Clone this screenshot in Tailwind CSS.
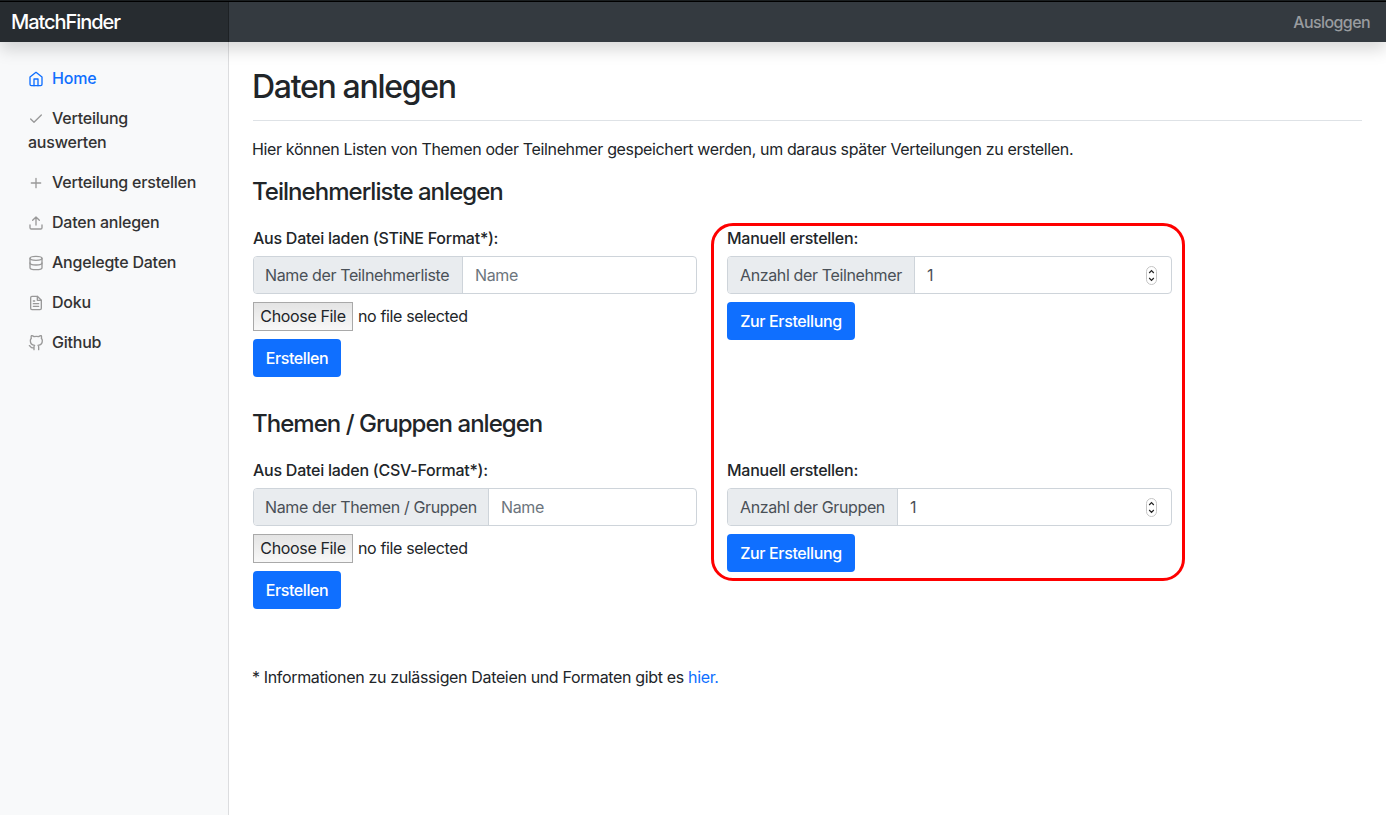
<!DOCTYPE html>
<html lang="de">
<head>
<meta charset="utf-8">
<title>MatchFinder</title>
<script src="https://cdn.jsdelivr.net/npm/@tailwindcss/browser@4"></script>
</head>
<body class="h-[815px] overflow-hidden bg-white font-['Inter','Liberation_Sans',sans-serif] text-base leading-6 text-[#212529] antialiased">
<div class="relative flex h-[815px] flex-col">
  <div class="h-px shrink-0 bg-[#1b1f21]"></div>
  <header class="relative z-10 flex h-[41px] shrink-0 items-center justify-between border-t border-black bg-[#343a40] pr-4 shadow-[0_8px_16px_rgba(0,0,0,0.15)]">
    <div class="flex h-10 w-[229px] items-center border-r border-[#1d2124] bg-[#272c30] pl-[11px] text-xl font-medium tracking-[-1.05px] text-white">MatchFinder</div>
    <a class="font-medium tracking-[-0.6px] text-[#999c9f]">Ausloggen</a>
  </header>

  <div class="flex min-h-0 grow">
    <nav class="w-[229px] shrink-0 border-r border-[#dcdddf] bg-[#f8f9fa] pt-4 font-medium tracking-[-0.22px] text-[#333]">
      <a class="block py-2 pl-7 text-[#0f6fff]"><svg class="mr-2 inline-block size-4 align-[-3px]" viewBox="0 0 24 24" fill="none" stroke="currentColor" stroke-width="2" stroke-linecap="round" stroke-linejoin="round"><path d="M3 9l9-7 9 7v11a2 2 0 0 1-2 2H5a2 2 0 0 1-2-2z"/><path d="M9 22V12h6v10"/></svg><span>Home</span></a>
      <a class="block py-2 pl-7"><svg class="mr-2 inline-block size-4 align-[-3px] text-[#999]" viewBox="0 0 24 24" fill="none" stroke="currentColor" stroke-width="2" stroke-linecap="round" stroke-linejoin="round"><path d="M20 6L9 17l-5-5"/></svg><span>Verteilung<br>auswerten</span></a>
      <a class="block py-2 pl-7"><svg class="mr-2 inline-block size-4 align-[-3px] text-[#999]" viewBox="0 0 24 24" fill="none" stroke="currentColor" stroke-width="2" stroke-linecap="round"><path d="M12 5v14M5 12h14"/></svg><span>Verteilung erstellen</span></a>
      <a class="block py-2 pl-7"><svg class="mr-2 inline-block size-4 align-[-3px] text-[#999]" viewBox="0 0 24 24" fill="none" stroke="currentColor" stroke-width="2" stroke-linecap="round" stroke-linejoin="round"><path d="M21 15v4a2 2 0 0 1-2 2H5a2 2 0 0 1-2-2v-4"/><path d="M17 8l-5-5-5 5M12 3v12"/></svg><span>Daten anlegen</span></a>
      <a class="block py-2 pl-7"><svg class="mr-2 inline-block size-4 align-[-3px] text-[#999]" viewBox="0 0 24 24" fill="none" stroke="currentColor" stroke-width="2" stroke-linecap="round" stroke-linejoin="round"><ellipse cx="12" cy="5" rx="9" ry="3"/><path d="M21 12c0 1.66-4 3-9 3s-9-1.34-9-3"/><path d="M3 5v14c0 1.66 4 3 9 3s9-1.34 9-3V5"/></svg><span>Angelegte Daten</span></a>
      <a class="block py-2 pl-7"><svg class="mr-2 inline-block size-4 align-[-3px] text-[#999]" viewBox="0 0 24 24" fill="none" stroke="currentColor" stroke-width="2" stroke-linecap="round" stroke-linejoin="round"><path d="M14 2H6a2 2 0 0 0-2 2v16a2 2 0 0 0 2 2h12a2 2 0 0 0 2-2V8z"/><path d="M14 2v6h6M16 13H8M16 17H8M10 9H8"/></svg><span>Doku</span></a>
      <a class="block py-2 pl-7"><svg class="mr-2 inline-block size-4 align-[-3px] text-[#999]" viewBox="0 0 24 24" fill="none" stroke="currentColor" stroke-width="2" stroke-linecap="round" stroke-linejoin="round"><path d="M9 19c-5 1.5-5-2.5-7-3m14 6v-3.87a3.37 3.37 0 0 0-.94-2.61c3.14-.35 6.44-1.54 6.44-7A5.44 5.44 0 0 0 20 4.77 5.07 5.07 0 0 0 19.91 1S18.73.65 16 2.48a13.38 13.38 0 0 0-7 0C6.27.65 5.09 1 5.09 1A5.07 5.07 0 0 0 5 4.77a5.44 5.44 0 0 0-1.5 3.78c0 5.42 3.3 6.61 6.44 7A3.37 3.37 0 0 0 9 18.13V22"/></svg><span>Github</span></a>
    </nav>

    <main class="grow px-6 pt-6">
      <h1 class="h-[55px] border-b border-[#dee2e6] text-[32px] font-medium leading-[41px] tracking-[-1.3px]"><span class="-ml-px">Daten anlegen</span></h1>
      <p class="mt-4 tracking-[-0.36px]"><span class="-ml-px">Hier können Listen von Themen oder Teilnehmer gespeichert werden, um daraus später Verteilungen zu erstellen.</span></p>

      <h4 class="mt-4 text-2xl font-medium leading-[29px] tracking-[-0.97px]"><span class="-ml-px">Teilnehmerliste anlegen</span></h4>
      <div class="mt-5 flex h-[183px] gap-[30px]">
        <div class="w-[444px]">
          <div class="font-medium tracking-[-0.25px]">Aus Datei laden (STiNE Format*):</div>
          <div class="mt-1.5 flex h-[38px] overflow-hidden rounded border border-[#ced4da]">
            <div class="flex w-[208px] items-center whitespace-nowrap bg-[#e9ecef] pl-[11px] tracking-[-0.37px] text-[#495057]">Name der Teilnehmerliste</div>
            <div class="flex grow items-center border-l border-[#ced4da] pl-3 tracking-[-0.37px] text-[#6c757d]">Name</div>
          </div>
          <div class="mt-2 flex h-[29px] items-center gap-[5px] tracking-[-0.35px]">
            <div class="flex h-[29px] w-[100px] items-center justify-center whitespace-nowrap border border-[#a9a9a9] bg-linear-to-b from-[#e4e4e4] to-[#f8f8f8] pb-0.5">Choose File</div>
            <div class="pb-0.5">no file selected</div>
          </div>
          <div class="mt-2 flex h-[38px] w-[88px] items-center justify-center rounded bg-[#0f6fff] font-medium tracking-[-0.4px] text-white">Erstellen</div>
        </div>
        <div class="w-[445px]">
          <div class="font-medium tracking-[-0.25px]">Manuell erstellen:</div>
          <div class="mt-1.5 flex h-[38px] overflow-hidden rounded border border-[#ced4da]">
            <div class="flex w-[186px] items-center whitespace-nowrap bg-[#e9ecef] pl-3 tracking-[-0.37px] text-[#495057]">Anzahl der Teilnehmer</div>
            <div class="flex grow items-center justify-between border-l border-[#ced4da] pl-3 pr-[14px] text-[#495057]"><span>1</span><svg class="h-[19px] w-[11px]" viewBox="0 0 11 19" fill="none"><rect x=".5" y=".5" width="10" height="18" rx="5" stroke="#c4c4c4"/><path d="M3.2 7l2.3-2.3L7.8 7M3.2 12l2.3 2.3L7.8 12" stroke="#222" stroke-width="1.2"/></svg></div>
          </div>
          <div class="mt-2 flex h-[38px] w-32 items-center justify-center rounded bg-[#0f6fff] font-medium tracking-[-0.37px] text-white">Zur Erstellung</div>
        </div>
      </div>

      <h4 class="text-2xl font-medium leading-[29px] tracking-[-0.97px]"><span class="-ml-px">Themen / Gruppen anlegen</span></h4>
      <div class="mt-5 flex h-[183px] gap-[30px]">
        <div class="w-[444px]">
          <div class="font-medium tracking-[-0.25px]">Aus Datei laden (CSV-Format*):</div>
          <div class="mt-1.5 flex h-[38px] overflow-hidden rounded border border-[#ced4da]">
            <div class="flex w-[234px] items-center whitespace-nowrap bg-[#e9ecef] pl-[11px] tracking-[-0.37px] text-[#495057]">Name der Themen / Gruppen</div>
            <div class="flex grow items-center border-l border-[#ced4da] pl-3 tracking-[-0.37px] text-[#6c757d]">Name</div>
          </div>
          <div class="mt-2 flex h-[29px] items-center gap-[5px] tracking-[-0.35px]">
            <div class="flex h-[29px] w-[100px] items-center justify-center whitespace-nowrap border border-[#a9a9a9] bg-linear-to-b from-[#e4e4e4] to-[#f8f8f8] pb-0.5">Choose File</div>
            <div class="pb-0.5">no file selected</div>
          </div>
          <div class="mt-2 flex h-[38px] w-[88px] items-center justify-center rounded bg-[#0f6fff] font-medium tracking-[-0.4px] text-white">Erstellen</div>
        </div>
        <div class="w-[445px]">
          <div class="font-medium tracking-[-0.25px]">Manuell erstellen:</div>
          <div class="mt-1.5 flex h-[38px] overflow-hidden rounded border border-[#ced4da]">
            <div class="flex w-[169px] items-center whitespace-nowrap bg-[#e9ecef] pl-3 tracking-[-0.37px] text-[#495057]">Anzahl der Gruppen</div>
            <div class="flex grow items-center justify-between border-l border-[#ced4da] pl-3 pr-[14px] text-[#495057]"><span>1</span><svg class="h-[19px] w-[11px]" viewBox="0 0 11 19" fill="none"><rect x=".5" y=".5" width="10" height="18" rx="5" stroke="#c4c4c4"/><path d="M3.2 7l2.3-2.3L7.8 7M3.2 12l2.3 2.3L7.8 12" stroke="#222" stroke-width="1.2"/></svg></div>
          </div>
          <div class="mt-2 flex h-[38px] w-32 items-center justify-center rounded bg-[#0f6fff] font-medium tracking-[-0.37px] text-white">Zur Erstellung</div>
        </div>
      </div>

      <p class="mt-6 tracking-[-0.35px]"><span class="-ml-px">* Informationen zu zulässigen Dateien und Formaten gibt es <a class="text-[#0f6fff]">hier.</a></span></p>
    </main>
  </div>
  <div class="absolute left-[711px] top-[223px] h-[358px] w-[474px] rounded-[22px] border-3 border-[#fe0000]"></div>
</div>
</body>
</html>
